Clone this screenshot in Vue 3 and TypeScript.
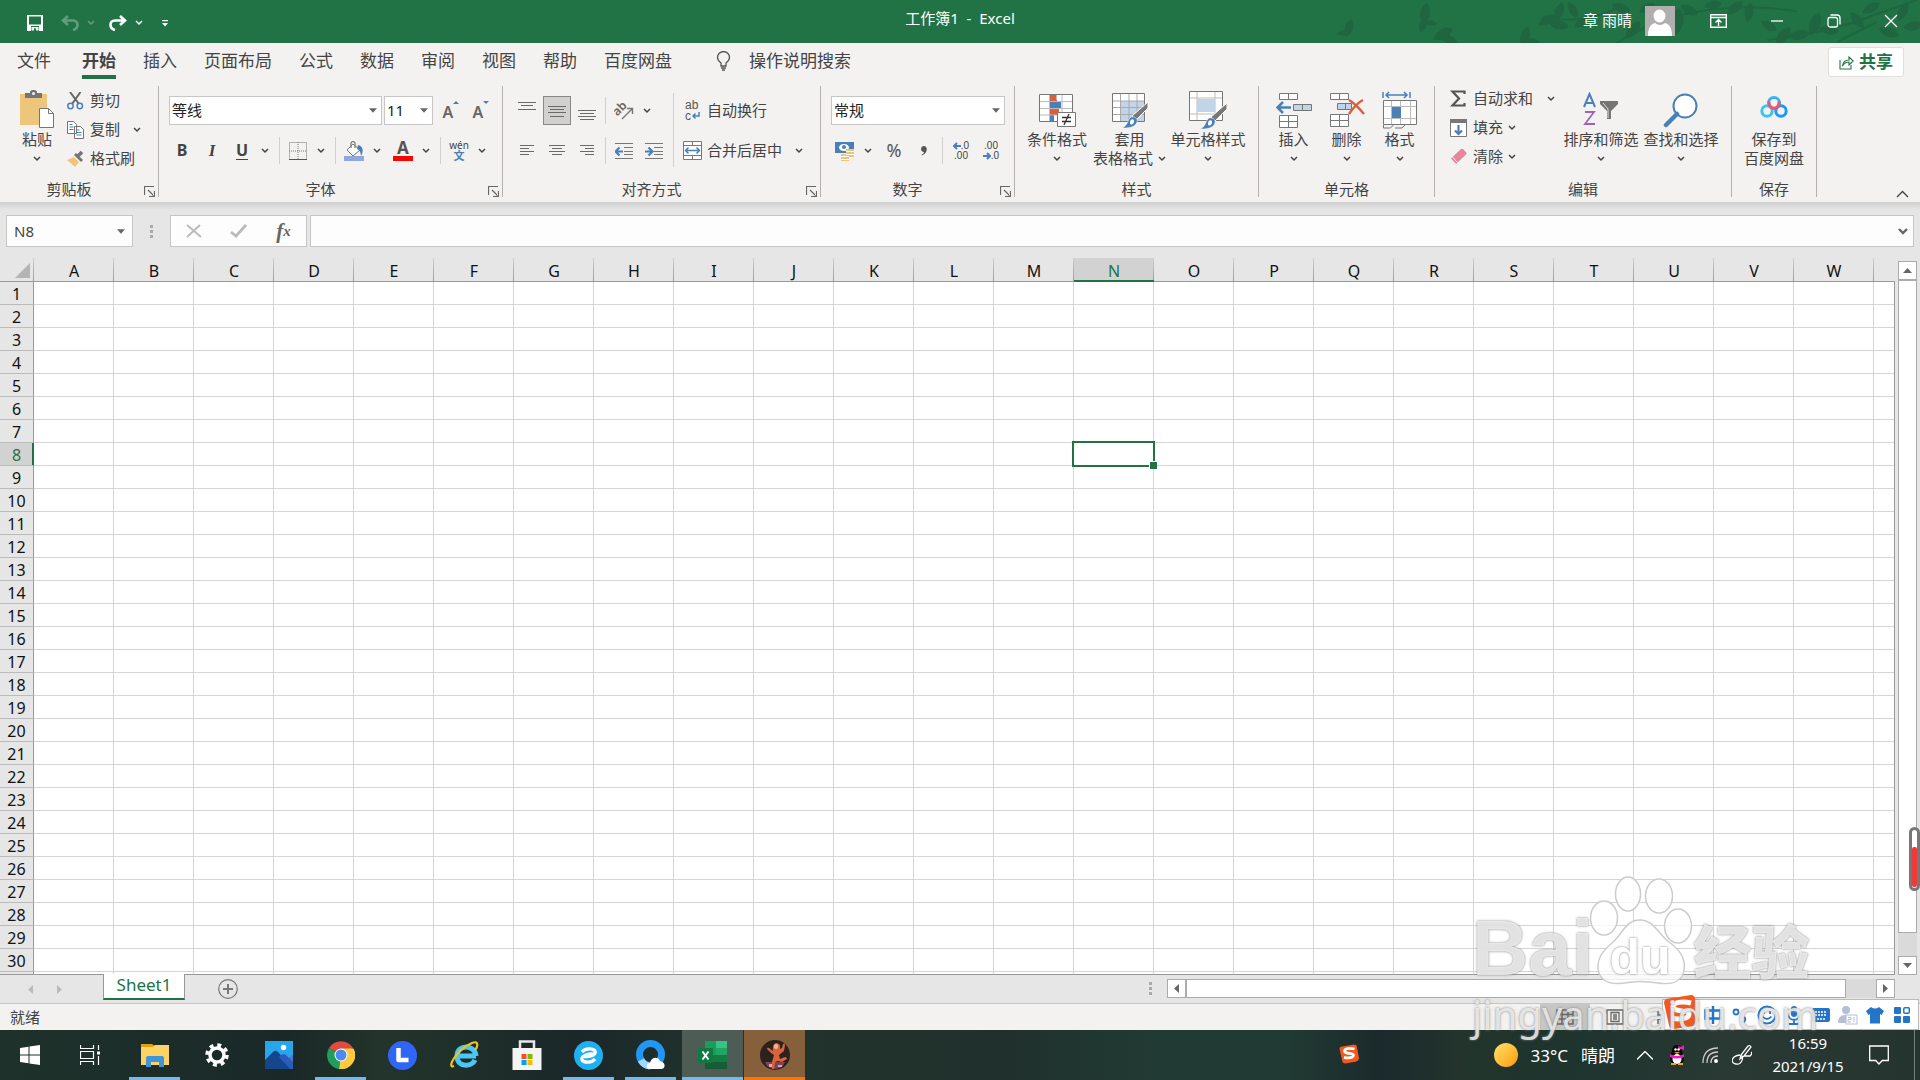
<script setup lang="ts">
import { h, ref } from 'vue'

const Chev = () =>
  h('svg', { class: 'chev', width: 8, height: 6, viewBox: '0 0 8 6', 'aria-hidden': 'true' }, [
    h('path', { d: 'M1 1l3 3 3-3', fill: 'none', stroke: 'currentColor', 'stroke-width': 1.5 }),
  ])

const Launcher = () =>
  h('svg', { class: 'launcher', width: 11, height: 11, viewBox: '0 0 11 11', 'aria-hidden': 'true' }, [
    h('path', { d: 'M.5 9V.5H10M4 4l5.500 5.500M10.500 5v5.500H5', fill: 'none', stroke: '#666', 'stroke-width': 1.2 }),
  ])

const Tri = (props: { dir: 'up' | 'down' | 'left' | 'right' }) => {
  const d = {
    up: 'M0 7L4.500 2 9 7z',
    down: 'M0 2L4.500 7 9 2z',
    left: 'M7 0L2 4.500 7 9z',
    right: 'M2 0l5 4.500L2 9z',
  }[props.dir]
  return h('svg', { width: 9, height: 9, viewBox: '0 0 9 9', 'aria-hidden': 'true' }, [h('path', { d, fill: 'currentColor' })])
}
Tri.props = ['dir']

const Lines = (props: { d: string }) =>
  h('svg', { width: 18, height: 18, viewBox: '0 0 18 18', 'aria-hidden': 'true' }, [
    h('path', { d: props.d, fill: 'none', stroke: '#6a6a6a', 'shape-rendering': 'crispEdges' }),
  ])
Lines.props = ['d']

const tabs: string[] = ['插入', '页面布局', '公式', '数据', '审阅', '视图', '帮助', '百度网盘']
const columns: string[] = 'ABCDEFGHIJKLMNOPQRSTUVW'.split('')
const rowCount = 30
const fontName = ref('等线')
const fontSize = ref('11')
const numberFormat = ref('常规')
const nameBox = ref('N8')
const formula = ref('')

interface Leaf { x: number; y: number; r: number; s: number }
const leaves: Leaf[] = [
  { x: 12, y: 28, r: 15, s: 9 }, { x: 6, y: 33, r: 80, s: 6 }, { x: 88, y: 14, r: 8, s: 11 }, { x: 86, y: 25, r: 20, s: 8 },
  { x: 94, y: 23, r: 100, s: 6 }, { x: 106, y: 34, r: 60, s: 11 }, { x: 112, y: 40, r: 110, s: 9 }, { x: 188, y: 36, r: 20, s: 10 },
  { x: 194, y: 42, r: 90, s: 9 }, { x: 210, y: 20, r: 60, s: 10 }, { x: 222, y: 12, r: 20, s: 10 }, { x: 222, y: 25, r: 100, s: 10 },
  { x: 236, y: 10, r: 150, s: 9 }, { x: 246, y: 22, r: 60, s: 10 }, { x: 284, y: 8, r: 110, s: 10 }, { x: 296, y: 30, r: 40, s: 11 },
  { x: 310, y: 8, r: 60, s: 9 }, { x: 340, y: 22, r: 10, s: 14 }, { x: 352, y: 10, r: 120, s: 10 }, { x: 376, y: 5, r: 80, s: 9 },
  { x: 398, y: 8, r: 50, s: 10 }, { x: 412, y: 12, r: 10, s: 10 }, { x: 432, y: 26, r: 120, s: 9 }, { x: 446, y: 36, r: 40, s: 11 },
  { x: 462, y: 35, r: 80, s: 11 }, { x: 478, y: 24, r: 20, s: 12 }, { x: 492, y: 30, r: 100, s: 10 }, { x: 520, y: 20, r: 140, s: 10 },
  { x: 534, y: 8, r: 60, s: 10 }, { x: 552, y: 32, r: 110, s: 11 }, { x: 566, y: 12, r: 30, s: 10 }, { x: 576, y: 26, r: 80, s: 10 },
]
</script>

<template>
  <div class="app">
    <header class="titlebar">
      <svg class="foliage" width="583" height="43" viewBox="0 0 583 43" aria-hidden="true">
        <g fill="#1f6640">
          <path
            v-for="(l, i) in leaves" :key="i" d="M0-1C.7-.4.5.5 0 1-.5.5-.7-.4 0-1z"
            :transform="`translate(${l.x} ${l.y}) rotate(${l.r}) scale(${l.s})`"
          />
        </g>
        <path d="M205 18c30 4 50 2 80-12M280 43c22-16 60-30 100-34s60 0 80 2M430 40c30-4 70-10 110-26l40-14M500 42l40-20" fill="none" stroke="#1f6640" stroke-width="2" />
      </svg>
      <nav class="quick" aria-label="快速访问">
        <button class="q-save" aria-label="保存">
          <svg width="16" height="16" viewBox="0 0 16 16"><path d="M0 0h16v16H0z" fill="#fff" /><path d="M2 1.500h12v8H2zM4 11h8v5H4z" fill="#217346" /><path d="M4.500 12h7v3.500h-2.500v-2H7v2H4.500z" fill="#fff" /><path d="M7 13.500h1.500V16H7z" fill="#217346" /></svg>
        </button>
        <button class="q-arrow dim" aria-label="撤消">
          <svg width="18" height="16" viewBox="0 0 18 16"><path d="M7 1L2 5.500 7 10M2.500 5.500H12c6 0 6 8 0 9.500" fill="none" stroke="currentColor" stroke-width="2.600" /></svg>
        </button>
        <button class="q-chev dim" aria-label="撤消列表"><Chev /></button>
        <button class="q-arrow" aria-label="恢复">
          <svg width="18" height="16" viewBox="0 0 18 16"><path d="M11 1l5 4.500L11 10M15.500 5.500H6c-6 0-6 8 0 9.500" fill="none" stroke="currentColor" stroke-width="2.600" /></svg>
        </button>
        <button class="q-chev" aria-label="恢复列表"><Chev /></button>
        <button class="q-more" aria-label="自定义快速访问工具栏">
          <svg width="6" height="7" viewBox="0 0 6 7"><path d="M0 0h6v1.200H0zM0 3h6L3 6.500z" fill="#fff" /></svg>
        </button>
      </nav>
      <h1 class="doc-title">工作簿1&nbsp; -&nbsp; Excel</h1>
      <div class="window-tools">
        <span class="user">章 雨晴</span>
        <svg class="avatar" width="30" height="30" viewBox="0 0 30 30" aria-hidden="true"><path d="M0 0h30v30H0z" fill="#b1afae" /><ellipse cx="14.500" cy="10" rx="6" ry="6.500" fill="#fff" /><path d="M3 30c0-9 3-12 7-13 3 2.500 7 2.500 10 0 4 1 7 4 7 13z" fill="#fff" /></svg>
        <button class="win opts" aria-label="功能区显示选项">
          <svg width="17" height="14" viewBox="0 0 17 14"><path d="M.7.700h15.600v12.600H.7zM1 3.500h15M8.500 12V5.500M5.500 8.500l3-3 3 3" fill="none" stroke="#fff" stroke-width="1.400" /></svg>
        </button>
        <button class="win" aria-label="最小化"><svg width="14" height="14" viewBox="0 0 14 14"><path d="M1 7h12" stroke="#fff" stroke-width="1.300" /></svg></button>
        <button class="win" aria-label="还原"><svg width="14" height="14" viewBox="0 0 14 14"><path d="M3.500 1h6.500q3 0 3 3v6.500" fill="none" stroke="#fff" stroke-width="1.300" /><rect x="1" y="3.500" width="9.500" height="9.500" rx="2" fill="none" stroke="#fff" stroke-width="1.300" /></svg></button>
        <button class="win" aria-label="关闭"><svg width="14" height="14" viewBox="0 0 14 14"><path d="M1 1l12 12M13 1L1 13" stroke="#fff" stroke-width="1.300" /></svg></button>
      </div>
    </header>

    <nav class="tabs" aria-label="功能区">
      <button class="tab file">文件</button>
      <button class="tab active">开始</button>
      <button v-for="t in tabs" :key="t" class="tab">{{ t }}</button>
      <button class="tell-me">
        <svg width="15" height="20" viewBox="0 0 15 20" aria-hidden="true"><path d="M5 15v-3C3 10.500 1.500 9 1.500 6.500a6 6 0 0 1 12 0C13.500 9 12 10.500 10 12v3zM5 17h5M6 19h3" fill="none" stroke="#555" stroke-width="1.300" /></svg>
        <span>操作说明搜索</span>
      </button>
      <button class="share">
        <svg width="15" height="15" viewBox="0 0 15 15" aria-hidden="true"><path d="M1 5v9h11v-4M3.500 11C4 7 6 5 10 5V2l4.200 4L10 10V7C7 7 5 8.500 3.500 11z" fill="none" stroke="#217346" stroke-width="1.100" /></svg>
        <span>共享</span>
      </button>
    </nav>

    <div class="ribbon">
      <section class="group g-clip">
        <div class="body">
          <button class="big paste">
            <span class="big-icon">
              <svg width="36" height="40" viewBox="0 0 36 40"><path d="M1 4h27v31H1z" fill="#eec67b" /><path d="M6 3h5V1.500Q14.500-2 18 1.500V3h5v5H6z" fill="#757575" /><circle cx="14.500" cy="3.500" r="1.500" fill="#f3f2f1" /><path d="M20.500 18.500h9l5 5v14h-14z" fill="#fff" stroke="#757575" /><path d="M29.500 18.500v5h5" fill="none" stroke="#757575" /></svg>
            </span>
            <span class="line">粘贴</span><span class="line"><Chev /></span>
          </button>
          <div class="list roomy">
            <button class="row">
              <svg class="ri" width="17" height="18" viewBox="0 0 17 18"><path d="M3 0l9 12M13.500 0L5 12" stroke="#666" stroke-width="2" /><circle cx="3.500" cy="14" r="2.700" fill="none" stroke="#4a80b8" stroke-width="1.500" /><circle cx="12.800" cy="14" r="2.700" fill="none" stroke="#4a80b8" stroke-width="1.500" /></svg>
              <span>剪切</span>
            </button>
            <button class="row">
              <svg class="ri" width="17" height="18" viewBox="0 0 17 18"><path d="M.5.500h6l3 3v9h-9zM7.500 5.500h6l3 3v9h-9z" fill="#fff" stroke="#757575" /><path d="M2.500 3.500h3M2.500 6h4M2.500 8.500h4M9.500 9h3M9.500 11.500h5M9.500 14h5" stroke="#4a80b8" /></svg>
              <span>复制</span><i class="gap-chev"><Chev /></i>
            </button>
            <button class="row">
              <svg class="ri" width="17" height="18" viewBox="0 0 17 18"><path d="M0 10l7-3 5 5-4 5z" fill="#eec67b" /><path d="M7 5l2-2 7 7-2 2z" fill="#757575" /><path d="M10 7l5-5" stroke="#757575" stroke-width="3.500" /></svg>
              <span>格式刷</span>
            </button>
          </div>
        </div>
        <div class="foot"><span>剪贴板</span><Launcher /></div>
      </section>

      <section class="group g-font">
        <div class="stack">
          <div class="tools fields">
            <div class="select w-font">
              <select v-model="fontName" aria-label="字体"><option>等线</option></select><Tri dir="down" />
            </div>
            <div class="select w-size">
              <select v-model="fontSize" aria-label="字号"><option>11</option></select><Tri dir="down" />
            </div>
            <button class="ib" aria-label="增大字号"><span class="letter-a">A</span><svg class="mark" width="6" height="4" viewBox="0 0 6 4"><path d="M0 3l3-3 3 3z" fill="#4a80b8" /></svg></button>
            <button class="ib" aria-label="减小字号"><span class="letter-a">A</span><svg class="mark" width="6" height="4" viewBox="0 0 6 4"><path d="M0 0l3 3 3-3z" fill="#4a80b8" /></svg></button>
          </div>
          <div class="tools">
            <button class="ib bold">B</button>
            <button class="ib italic">I</button>
            <button class="ib under">U</button>
            <button class="cb" aria-label="下划线样式"><Chev /></button>
            <i class="sep wide"></i>
            <button class="ib" aria-label="边框"><svg width="18" height="18" viewBox="0 0 18 18"><path d="M.5.500h17v17H.5zM9 0v18M0 9h18" fill="none" stroke="#777" stroke-dasharray="1 1" /><path d="M0 17.500h18" stroke="#555" /></svg></button>
            <button class="cb" aria-label="边框样式"><Chev /></button>
            <i class="sep wide"></i>
            <button class="ib" aria-label="填充颜色"><svg width="20" height="20" viewBox="0 0 20 20"><path d="M3 9l6-6 7 6-7 6z" fill="#fff" stroke="#777" /><path d="M7 7V2q2-3 4 0v5" fill="none" stroke="#777" stroke-width="1.200" /><path d="M14 4c5 1 6 6 3 11-.5-4-1-6-4-7z" fill="#4a80b8" /><path d="M0 15h20v5H0z" fill="#8ea9db" /></svg></button>
            <button class="cb" aria-label="填充颜色列表"><Chev /></button>
            <i class="nudge"></i>
            <button class="ib colour-a" aria-label="字体颜色"><span>A</span></button>
            <button class="cb" aria-label="字体颜色列表"><Chev /></button>
            <i class="sep wide"></i>
            <button class="ib pinyin"><span>wén</span><b>文</b></button>
            <button class="cb" aria-label="拼音选项"><Chev /></button>
          </div>
        </div>
        <div class="foot"><span>字体</span><Launcher /></div>
      </section>

      <section class="group g-align">
        <div class="align-area">
          <div class="stack">
            <div class="tools fields">
              <button class="ib" aria-label="顶端对齐"><Lines d="M0 .500h18M3 3.500h12M0 7.500h18" /></button>
              <button class="ib on" aria-label="垂直居中"><Lines d="M0 4.500h18M2 7.500h14M0 10.500h18M2 14.500h14" /></button>
              <button class="ib" aria-label="底端对齐"><Lines d="M0 8.500h18M2 11.500h14M0 14.500h18M2 17.500h14" /></button>
              <i class="sep"></i>
              <button class="ib" aria-label="方向"><svg width="20" height="20" viewBox="0 0 20 20"><text x="1" y="14" font-family="Noto Sans" font-size="12" font-weight="600" fill="#666" transform="rotate(-45 4 12)">ab</text><path d="M8 18L18 8M13 7.500h5.500V13" fill="none" stroke="#777" stroke-width="1.400" /></svg></button>
              <button class="cb" aria-label="方向选项"><Chev /></button>
            </div>
            <div class="tools">
              <button class="ib" aria-label="左对齐"><Lines d="M2 3.500h14M2 6.500h9M2 9.500h14M2 12.500h9" /></button>
              <button class="ib" aria-label="居中"><Lines d="M1 3.500h16M4 6.500h10M1 9.500h16M4 12.500h10" /></button>
              <button class="ib" aria-label="右对齐"><Lines d="M2 3.500h14M7 6.500h9M2 9.500h14M7 12.500h9" /></button>
              <i class="sep"></i>
              <button class="ib" aria-label="减少缩进量"><svg width="18" height="18" viewBox="0 0 18 18"><path d="M0 1.500h18M9 5.500h9M9 9.500h9M9 12.500h9M0 16.500h18" stroke="#777" /><path d="M8 9.500H1M4.500 5.500l-4 4 4 4" fill="none" stroke="#4a80b8" stroke-width="2.200" /></svg></button>
              <button class="ib" aria-label="增加缩进量"><svg width="18" height="18" viewBox="0 0 18 18"><path d="M0 1.500h18M9 5.500h9M9 9.500h9M9 12.500h9M0 16.500h18" stroke="#777" /><path d="M0 9.500h7M3.500 5.500l4 4-4 4" fill="none" stroke="#4a80b8" stroke-width="2.200" /></svg></button>
            </div>
          </div>
          <i class="tall-sep"></i>
          <div class="stack">
            <button class="row wrap-row">
              <span class="ri wrap-icon" aria-hidden="true"><span>ab</span><span>c<svg width="9" height="8" viewBox="0 0 9 8"><path d="M8 0v4H2M4.500 1.500L2 4l2.500 2.500" fill="none" stroke="#4a80b8" stroke-width="1.500" /></svg></span></span>
              <span>自动换行</span>
            </button>
            <button class="row">
              <svg class="ri" width="19" height="19" viewBox="0 0 19 19"><path d="M.5.500h18v18H.5z" fill="#fff" stroke="#777" /><path d="M.5 4.500h18M.5 14.500h18M9.500 0v4M9.500 15v4" stroke="#777" /><path d="M3 9.500h13M5.500 6.500l-3 3 3 3M13.500 6.500l3 3-3 3" fill="none" stroke="#4a80b8" stroke-width="1.500" /></svg>
              <span>合并后居中</span><i class="gap-chev"><Chev /></i>
            </button>
          </div>
        </div>
        <div class="foot"><span>对齐方式</span><Launcher /></div>
      </section>

      <section class="group g-num">
        <div class="stack">
          <div class="tools fields">
            <div class="select w-num">
              <select v-model="numberFormat" aria-label="数字格式"><option>常规</option></select><Tri dir="down" />
            </div>
          </div>
          <div class="tools">
            <button class="ib" aria-label="会计数字格式"><svg width="20" height="20" viewBox="0 0 20 20"><path d="M0 1h19v11H0z" fill="#4a80b8" /><ellipse cx="9" cy="6.500" rx="5" ry="3.500" fill="#fff" /><circle cx="9" cy="6" r="2" fill="#4a80b8" /><path d="M11 8h8v8h-8zM6 13h8v7H6z" fill="#eec67b" /><path d="M11 10.500h8M11 13.500h8M6 15.500h8M6 18.500h8" stroke="#fff" /></svg></button>
            <button class="cb" aria-label="货币列表"><Chev /></button>
            <i class="nudge"></i>
            <button class="ib percent">%</button>
            <button class="ib" aria-label="千位分隔样式"><svg width="6" height="10" viewBox="0 0 6 10"><path d="M3 0c4 0 4 7-2 9.500L.5 9C2 8 3 7 3 6-1 6-1 0 3 0z" fill="#555" /></svg></button>
            <i class="sep"></i>
            <button class="ib dec"><span><svg width="8" height="8" viewBox="0 0 8 8"><path d="M8 4H1M4 1L1 4l3 3" fill="none" stroke="#4a80b8" stroke-width="2" /></svg>.0</span><span>.00</span></button>
            <button class="ib dec"><span>.00</span><span><svg width="8" height="8" viewBox="0 0 8 8"><path d="M0 4h7M4 1l3 3-3 3" fill="none" stroke="#4a80b8" stroke-width="2" /></svg>.0</span></button>
          </div>
        </div>
        <div class="foot"><span>数字</span><Launcher /></div>
      </section>

      <section class="group g-style">
        <div class="body">
          <button class="big w70">
            <span class="big-icon"><svg width="38" height="36" viewBox="0 0 38 36"><path d="M1 2h33v27H1z" fill="#fff" /><path d="M11 2h8v7h-8zM11 17h10v6H11z" fill="#d9603b" /><path d="M11 9h12v7H11zM11 23h5v6h-5z" fill="#4a80b8" /><path d="M1 9.500h33M1 16.500h33M1 23h33M11.500 2v27M18.500 2v6M24 2v27" fill="none" stroke="#bbb" /><path d="M1.500 2.500h33v27h-33z" fill="none" stroke="#777" /><path d="M19.500 20.500h18v14h-18z" fill="#fff" stroke="#777" /><path d="M24 25.500h9M24 29.500h9M31 22l-5 11" stroke="#333" stroke-width="1.300" /></svg></span>
            <span class="line">条件格式</span><span class="line"><Chev /></span>
          </button>
          <button class="big w74">
            <span class="big-icon"><svg width="38" height="36" viewBox="0 0 38 36"><path d="M1.500 1.500h33v28h-33z" fill="#fff" /><path d="M10 9h24v20H10z" fill="#c2d4e8" /><path d="M1 9h33M1 15.500h33M1 22.500h33M9.500 1v28M18 1v28M26 1v28" stroke="#aaa" /><path d="M1.500 1.500h32v28h-32z" fill="none" stroke="#777" /><path d="M37 10v6L25 28l-4-4z" fill="#777" stroke="#fff" /><path d="M11 36c6-2 5-8 9-11 5-1 8 3 5 7-3 4-9 4-14 4z" fill="#4a80b8" stroke="#fff" stroke-width=".500" /><path d="M19 30c0-3 4-4 4-1s-2 4-4 3z" fill="#fff" /></svg></span>
            <span class="line">套用</span><span class="line">表格格式<Chev /></span>
          </button>
          <button class="big w82">
            <span class="big-icon"><svg width="38" height="38" viewBox="0 0 38 38"><path d="M.5.500h33v29H.5z" fill="#fff" /><path d="M0 7h33M0 23h33M8 0v29M26 0v29" stroke="#bbb" /><path d="M8 8h18v13H8z" fill="#c2d4e8" /><path d="M.5.500h33v29H.5z" fill="none" stroke="#777" /><path d="M38 12v6L26 30l-4-4z" fill="#777" stroke="#fff" /><path d="M11 38c6-2 5-8 9-11 5-1 8 3 5 7-3 4-9 4-14 4z" fill="#4a80b8" stroke="#fff" stroke-width=".500" /><path d="M19 32c0-3 4-4 4-1s-2 4-4 3z" fill="#fff" /></svg></span>
            <span class="line">单元格样式</span><span class="line"><Chev /></span>
          </button>
        </div>
        <div class="foot plain"><span>样式</span></div>
      </section>

      <section class="group g-cells">
        <div class="body">
          <button class="big w52">
            <span class="big-icon"><svg width="36" height="36" viewBox="0 0 36 36"><path d="M3.500 1.500h18v6h-18zM3.500 23.500h18v12h-18zM3.500 29.500h18M12.500 1.500v6M12.500 23.500v12" fill="#fff" stroke="#777" /><path d="M17.500 12.500h18v6h-18zM26.500 12.500v6" fill="#c2d4e8" stroke="#777" /><path d="M15 15.500H2M7 10l-5.500 5.500L7 21" fill="none" stroke="#4a80b8" stroke-width="2.500" /></svg></span>
            <span class="line">插入</span><span class="line"><Chev /></span>
          </button>
          <button class="big w52">
            <span class="big-icon"><svg width="36" height="36" viewBox="0 0 36 36"><path d="M1.500 1.500h18v6h-18zM1.500 22.500h18v12h-18zM1.500 28.500h18M10.500 1.500v6M10.500 22.500v12" fill="#fff" stroke="#777" /><path d="M8.500 11.500h14v6h-14zM16.500 11.500v6" fill="#c2d4e8" stroke="#4a80b8" /><path d="M20 8c5 3 10 8 15 14M34 8c-6 3-10 8-14 14" fill="none" stroke="#d9603b" stroke-width="2.500" /></svg></span>
            <span class="line">删除</span><span class="line"><Chev /></span>
          </button>
          <button class="big w52">
            <span class="big-icon"><svg width="36" height="38" viewBox="0 0 36 38"><path d="M1.500 9.500h33v24h-33z" fill="#fff" /><path d="M1 15.500h33M1 27.500h33M9.500 9v24M18.500 9v24M28.500 9v24" stroke="#bbb" /><path d="M10 16h9v11h-9z" fill="#4a80b8" /><path d="M1.500 9.500h33v24h-33z" fill="none" stroke="#777" /><path d="M1.500 34v3h7l3-3M13 37h7l3-3" fill="none" stroke="#777" /><path d="M1 1v6M28 1v6M4 4h21M7 1L4 4l3 3M22 1l3 3-3 3" fill="none" stroke="#4a80b8" stroke-width="1.500" /></svg></span>
            <span class="line">格式</span><span class="line"><Chev /></span>
          </button>
        </div>
        <div class="foot plain"><span>单元格</span></div>
      </section>

      <section class="group g-edit">
        <div class="body">
          <div class="list dense">
            <button class="row">
              <svg class="ri" width="17" height="17" viewBox="0 0 17 17"><path d="M14.500 4V1.500H2.500L9 8.500l-6.500 7h12V13" fill="none" stroke="#555" stroke-width="2.200" /></svg>
              <span>自动求和</span><i class="gap-chev"><Chev /></i>
            </button>
            <button class="row">
              <svg class="ri" width="17" height="18" viewBox="0 0 17 18"><path d="M.5.500h16v17H.5z" fill="#fff" stroke="#777" /><path d="M0 0h17v4H0z" fill="#777" /><path d="M8.500 6v9M5 11.500l3.500 3.500 3.500-3.500" fill="none" stroke="#4a80b8" stroke-width="2.200" /></svg>
              <span>填充</span><Chev />
            </button>
            <button class="row">
              <svg class="ri" width="17" height="17" viewBox="0 0 17 17"><path d="M11 1h2l3.500 4v1L6 16 1 10.500z" fill="#e5869a" /><path d="M2.500 9l5 5.500" stroke="#f3f2f1" /></svg>
              <span>清除</span><Chev />
            </button>
          </div>
          <button class="big w80">
            <span class="big-icon"><svg width="36" height="36" viewBox="0 0 36 36"><path d="M17 9h18v3l-7 7v8h-4v-8l-7-7z" fill="#757575" /><path d="M20 11l5 6v9" fill="none" stroke="#ddd" /><path d="M1 15L6.500 2 12 15M3 11h7" fill="none" stroke="#4a80b8" stroke-width="2" /><path d="M2 20h9L2 32h10" fill="none" stroke="#9a64b8" stroke-width="1.800" /></svg></span>
            <span class="line">排序和筛选</span><span class="line"><Chev /></span>
          </button>
          <button class="big w80">
            <span class="big-icon"><svg width="36" height="36" viewBox="0 0 36 36"><circle cx="22" cy="14" r="11.500" fill="#fff" stroke="#4a80b8" stroke-width="2" /><path d="M14 22L3 33" stroke="#4a80b8" stroke-width="4.500" stroke-linecap="round" /></svg></span>
            <span class="line">查找和选择</span><span class="line"><Chev /></span>
          </button>
        </div>
        <div class="foot plain"><span>编辑</span></div>
      </section>

      <section class="group g-save">
        <div class="body">
          <button class="big w84">
            <span class="big-icon cloud"><svg width="28" height="22" viewBox="0 0 28 22"><circle cx="14" cy="7" r="5.500" fill="none" stroke="#33b5f5" stroke-width="3" /><circle cx="7" cy="15" r="5.200" fill="none" stroke="#3cc4ee" stroke-width="3" /><circle cx="21" cy="15" r="5.200" fill="none" stroke="#1b9bf5" stroke-width="3" /><path d="M9 5.500c-1 9 11 9 10 0" fill="none" stroke="#f2506e" stroke-width="3" /></svg></span>
            <span class="line">保存到</span><span class="line">百度网盘</span>
          </button>
        </div>
        <div class="foot plain"><span>保存</span></div>
      </section>
      <button class="collapse" aria-label="折叠功能区"><svg width="13" height="8" viewBox="0 0 13 8"><path d="M1 7l5.500-5.500L12 7" fill="none" stroke="#444" stroke-width="1.400" /></svg></button>
    </div>

    <div class="formula-bar">
      <div class="name-box"><input v-model="nameBox" aria-label="名称框"><Tri dir="down" /></div>
      <span class="dots"><i></i><i></i><i></i></span>
      <div class="fx">
        <button aria-label="取消"><svg width="16" height="14" viewBox="0 0 16 14"><path d="M1 1l14 12M14 1L1 13" stroke="#bbb" stroke-width="2" /></svg></button>
        <button aria-label="输入"><svg width="17" height="14" viewBox="0 0 17 14"><path d="M1 8l5 4L16 1" fill="none" stroke="#bbb" stroke-width="2.800" /></svg></button>
        <button class="fx-btn">f<sub>x</sub></button>
      </div>
      <div class="formula">
        <input v-model="formula" aria-label="编辑栏">
        <svg width="10" height="7" viewBox="0 0 10 7" aria-hidden="true"><path d="M1 1l4 4 4-4" fill="none" stroke="#666" stroke-width="2.400" /></svg>
      </div>
    </div>

    <main class="sheet">
      <div class="grid-wrap">
        <table class="cells">
          <thead>
            <tr>
              <th class="corner"><svg width="15" height="15" viewBox="0 0 15 15" aria-hidden="true"><path d="M15 0v15H0z" fill="#b4b4b4" /></svg></th>
              <th v-for="c in columns" :key="c" scope="col" :class="{ sel: c === 'N' }">{{ c }}</th>
              <th></th>
            </tr>
          </thead>
          <tbody>
            <tr v-for="r in rowCount + 1" :key="r">
              <th scope="row" :class="{ sel: r === 8 }">{{ r <= rowCount ? r : '' }}</th>
              <td v-for="c in columns" :key="c" :class="{ cur: r === 8 && c === 'N' }"></td>
              <td></td>
            </tr>
          </tbody>
        </table>
      </div>
      <div class="vscroll">
        <button aria-label="向上滚动"><Tri dir="up" /></button>
        <div class="v-thumb"></div>
        <div class="v-rest"></div>
        <button aria-label="向下滚动"><Tri dir="down" /></button>
      </div>
      <div class="meter" aria-hidden="true"><i></i></div>
    </main>

    <div class="sheet-bar">
      <div class="sheet-nav"><button aria-label="上一个"><Tri dir="left" /></button><button aria-label="下一个"><Tri dir="right" /></button></div>
      <button class="sheet-tab">Sheet1</button>
      <button class="add" aria-label="新工作表"><svg width="20" height="20" viewBox="0 0 20 20"><circle cx="10" cy="10" r="9.300" fill="none" stroke="#777" stroke-width="1.200" /><path d="M5 10h10M10 5v10" stroke="#777" stroke-width="2" /></svg></button>
      <span class="dots"><i></i><i></i><i></i></span>
      <div class="hscroll">
        <button aria-label="向左滚动"><Tri dir="left" /></button>
        <div class="h-thumb"></div>
        <div class="h-rest"></div>
        <button aria-label="向右滚动"><Tri dir="right" /></button>
      </div>
    </div>

    <footer class="status">
      <span>就绪</span>
      <div class="views">
        <button class="view on" aria-label="普通"><svg width="18" height="16" viewBox="0 0 18 16"><path d="M1 1h16v14H1zM1 5.500h16M1 10h16M6 1v14M12 1v14" fill="none" stroke="#666" stroke-width="1.500" /></svg></button>
        <button class="view" aria-label="页面布局"><svg width="18" height="16" viewBox="0 0 18 16"><path d="M1 1h16v14H1zM5 3.500h8v9H5zM7 6h4M7 8h4M7 10h4" fill="none" stroke="#666" stroke-width="1.300" /></svg></button>
        <button class="view" aria-label="分页预览"><svg width="18" height="16" viewBox="0 0 18 16"><path d="M2 1v5h5V1M11 1v5h5V1M2 15v-5h14v5" fill="none" stroke="#666" stroke-width="1.500" /></svg></button>
      </div>
      <div class="ime">
        <svg class="ime-logo" width="36" height="36" viewBox="0 0 36 36"><path d="M3 5L28 1q3 0 4 3l4 22q-1 4-6 6l-19 3q-4 0-5-4L1 9q0-3 2-4z" fill="#f4581e" /><path d="M28 9C20 7 9 8 10 13c1 6 16 2 16 7s-10 6-17 4" fill="none" stroke="#fff" stroke-width="5" /></svg>
        <button aria-label="中文"><svg width="18" height="20" viewBox="0 0 18 20"><path d="M1.500 5.500h15v8h-15zM9 1v18" fill="none" stroke="#2475c8" stroke-width="2.500" /></svg></button>
        <button aria-label="标点"><svg width="18" height="20" viewBox="0 0 18 20"><circle cx="5" cy="7" r="2.500" fill="none" stroke="#2475c8" stroke-width="1.800" /><path d="M13 12q3 2-1 6" fill="none" stroke="#2475c8" stroke-width="2" /></svg></button>
        <button aria-label="表情"><svg width="20" height="20" viewBox="0 0 20 20"><circle cx="10" cy="10" r="8.500" fill="none" stroke="#2475c8" stroke-width="2" /><path d="M7 6v3M13 6v3M5.500 11.500q4.500 5 9 0" fill="none" stroke="#2475c8" stroke-width="1.800" /></svg></button>
        <button aria-label="语音"><svg width="18" height="20" viewBox="0 0 18 20"><rect x="6" y="1" width="6" height="11" rx="3" fill="#2475c8" /><path d="M3 8c0 9 12 9 12 0M9 14v5M4 19h10" fill="none" stroke="#2475c8" stroke-width="1.800" /></svg></button>
        <button aria-label="软键盘"><svg width="20" height="20" viewBox="0 0 20 20"><rect x="1" y="3" width="18" height="14" rx="2" fill="#2475c8" /><path d="M4 7h12M4 10h12M6 14h8" stroke="#fff" stroke-width="1.500" stroke-dasharray="2 1" /></svg></button>
        <button aria-label="账户"><svg width="20" height="20" viewBox="0 0 20 20"><circle cx="8" cy="5" r="4" fill="#b3bfd6" /><path d="M0 17c0-9 14-9 14-3v4H1z" fill="#b3bfd6" /><rect x="8" y="10" width="11" height="9" fill="#fff" stroke="#b3bfd6" /><path d="M10 12.500h3v2h-3v2.500h3M16 12v5" fill="none" stroke="#b3bfd6" /></svg></button>
        <button aria-label="皮肤"><svg width="18" height="20" viewBox="0 0 18 20"><path d="M5 2q4 3 8 0l5 4-2.500 4L14 9v9.500H4V9l-1.500 1L0 6z" fill="#2475c8" /></svg></button>
        <button aria-label="工具箱"><svg width="18" height="20" viewBox="0 0 18 20"><rect x="1" y="2" width="7" height="7" rx="1" fill="#2475c8" /><rect x="1" y="11" width="7" height="7" rx="1" fill="#2475c8" /><rect x="10" y="11" width="7" height="7" rx="1" fill="#2475c8" /><rect x="10.800" y="2.800" width="5.500" height="5.500" rx="1" fill="none" stroke="#2475c8" stroke-width="1.500" /></svg></button>
      </div>
    </footer>

    <nav class="taskbar" aria-label="任务栏">
      <button class="sys" aria-label="开始"><svg width="20" height="20" viewBox="0 0 20 20"><path d="M0 3l8.500-1.200V9.500H0zM9.500 1.600L20 0v9.500H9.500zM0 10.500h8.500v7.700L0 17zM9.500 10.500H20V20L9.500 18.400z" fill="#fff" /></svg></button>
      <button class="sys" aria-label="任务视图"><svg width="20" height="20" viewBox="0 0 20 20"><path d="M.5 0v3.500h13V0M.5 20v-3.500h13V20M.5 6.500h13v7H.5zM18.500 0v5M18.500 11v9" fill="none" stroke="#fff" stroke-width="1.200" /><path d="M17 6.500h3v3h-3z" fill="#fff" /></svg></button>
      <i class="nudge"></i>
      <button class="task run" aria-label="文件资源管理器"><svg width="28" height="24" viewBox="0 0 28 24"><path d="M0 1h11l3 2v4H0z" fill="#e0a010" /><path d="M0 4h12l2-2h14v20H0z" fill="#fdd365" /><path d="M5 24V15q0-2 2-2h14q2 0 2 2v9h-5v-5h-8v5z" fill="#3f95d8" /></svg></button>
      <button class="task" aria-label="设置"><svg width="24" height="24" viewBox="0 0 24 24"><circle cx="12" cy="12" r="7" fill="none" stroke="#fff" stroke-width="3.500" /><circle cx="12" cy="12" r="10" fill="none" stroke="#fff" stroke-width="3.500" stroke-dasharray="3.900 3.954" /></svg></button>
      <button class="task" aria-label="照片"><svg width="28" height="28" viewBox="0 0 28 28"><path d="M0 0h28v28H0z" fill="#28a6ea" /><path d="M12 28L28 13v15z" fill="#5672d0" /><path d="M0 19L9 10q2-1 4 1l15 17H0z" fill="#15458a" /><path d="M14 16q4-5 7-2l7 7v7h-3z" fill="#2b5cba" /><circle cx="18.500" cy="6.500" r="2.700" fill="#fff" /></svg></button>
      <button class="task run" aria-label="浏览器"><svg width="28" height="28" viewBox="0 0 28 28"><path d="M14 14L2 7a14 14 0 0 1 24 0z" fill="#e04b3f" /><path d="M14 14L2 7a14 14 0 0 0 10 21z" fill="#1f9f5b" /><path d="M14 14l-2 14A14 14 0 0 0 26.500 7.500H14z" fill="#fecb3e" /><circle cx="14" cy="14" r="6.500" fill="#fff" /><circle cx="14" cy="14" r="5.500" fill="#4a8af4" /></svg></button>
      <button class="task" aria-label="联想"><svg width="29" height="29" viewBox="0 0 29 29"><circle cx="14.500" cy="14.500" r="14.500" fill="#2f66f5" /><path d="M10.500 7v12h10" fill="none" stroke="#fff" stroke-width="4.500" stroke-linejoin="round" /></svg></button>
      <button class="task" aria-label="Internet Explorer"><svg width="30" height="28" viewBox="0 0 30 28"><path d="M6 15h20M25 19c-3 7-18 8-18-4S25 3 26 15" fill="none" stroke="#4cc6f2" stroke-width="5" /><path d="M4 25C-4 28 6 9 22 2c7-3 6 4 3 7" fill="none" stroke="#f2c21c" stroke-width="2.200" /></svg></button>
      <button class="task" aria-label="应用商店"><svg width="30" height="30" viewBox="0 0 30 30"><path d="M8 8V1.500h14V8" fill="none" stroke="#e8e8e8" stroke-width="2.500" /><path d="M.5 8h29v22H.5z" fill="#f4f4f4" /><path d="M9.500 14h5v5h-5z" fill="#f25022" /><path d="M15.500 14h5v5h-5z" fill="#7fba00" /><path d="M9.500 20h5v5h-5z" fill="#00a4ef" /><path d="M15.500 20h5v5h-5z" fill="#ffb900" /></svg></button>
      <button class="task run" aria-label="网络浏览器"><svg width="29" height="29" viewBox="0 0 29 29"><circle cx="14.500" cy="14.500" r="14.500" fill="#1fb0f2" /><path d="M9 15c5 2 14-1 12-5-2-3-10-3-13 1M20 13c-5-1-14 2-12 6 2 3 10 3 13-1" fill="none" stroke="#fff" stroke-width="3.200" /></svg></button>
      <button class="task run" aria-label="QQ浏览器"><svg width="30" height="30" viewBox="0 0 30 30"><circle cx="14.500" cy="14.500" r="11" fill="none" stroke="#2196f3" stroke-width="7" /><path d="M5 20a11 11 0 0 0 9 6" fill="none" stroke="#9fd8fa" stroke-width="7" /><path d="M13 29c-4-2-2-6 1-6 1-6 8-7 10-2 6 1 6 8 1 8z" fill="#fff" /></svg></button>
      <button class="task run current" aria-label="Excel"><svg width="30" height="28" viewBox="0 0 30 28"><path d="M7 0h22v28H7z" fill="#1c9c5b" /><path d="M18 0h11v7H18z" fill="#35c481" /><path d="M18 7h11v7H18z" fill="#22a565" /><path d="M7 14h22v7H7z" fill="#137c41" /><path d="M7 21h22v7H7z" fill="#185c37" /><rect y="7" width="15" height="15" rx="1" fill="#107a40" /><path d="M4.500 10.500l6 8M10.500 10.500l-6 8" stroke="#fff" stroke-width="2" /></svg></button>
      <button class="task run alert" aria-label="视频"><svg width="30" height="30" viewBox="0 0 30 30"><circle cx="15" cy="15" r="15" fill="#2c211f" /><path d="M5 22h20l-2 4q-8 6-16 0z" fill="#7c4350" /><path d="M9 24h3v3H9zM18 25h4v2h-4z" fill="#e8a0b4" /><path d="M7 9q0-2 2-1l4 3q-1-7 3-8 5 0 4 6l2-1 1-4q2-1 2 1l-1 6-5 4 1 4q4-2 6-2l1 2-5 3-4-1-3 1-1 7h-2V22l2-7-3-2z" fill="#d9633a" /><path d="M14 5q2-2 4 0v3q-2 2-4 0z" fill="#f0b58a" /></svg></button>
      <div class="tray">
        <svg class="sogou" width="20" height="20" viewBox="0 0 36 36" aria-hidden="true"><path d="M3 5L28 1q3 0 4 3l4 22q-1 4-6 6l-19 3q-4 0-5-4L1 9q0-3 2-4z" fill="#f4581e" /><path d="M28 9C20 7 9 8 10 13c1 6 16 2 16 7s-10 6-17 4" fill="none" stroke="#fff" stroke-width="5" /></svg>
        <button class="weather"><i class="sun"></i><span>33°C</span><span>晴朗</span></button>
        <button class="tr" aria-label="显示隐藏的图标"><svg width="16" height="9" viewBox="0 0 16 9"><path d="M0 8.500l8-8 8 8" fill="none" stroke="#fff" stroke-width="1.400" /></svg></button>
        <button class="tr slim" aria-label="QQ"><svg width="16" height="20" viewBox="0 0 16 20"><path d="M3 6q0-6 5-6t5 6l2 7q0 6-7 6t-7-6z" fill="#090909" /><ellipse cx="8" cy="14" rx="4.500" ry="5" fill="#fff" /><path d="M1 9q7 4 14 0v3q-7 3-14 0zM9 1l3 1 3-2v5l-3-1-2 1z" fill="#f21bc3" /><circle cx="6.500" cy="4.500" r="1.200" fill="#fff" /><circle cx="9.500" cy="4.500" r="1.200" fill="#fff" /><path d="M5 7h6l-3 2zM2 18h5v2H2zM9 18h5v2H9z" fill="#f5a30a" /></svg></button>
        <button class="tr" aria-label="网络"><svg width="16" height="16" viewBox="0 0 16 16"><path d="M1 16Q1 1 16 1M5 16Q5 5 16 5M9 16q0-7 7-7" fill="none" stroke="#ccc" stroke-width="1.300" /><circle cx="14" cy="14" r="2" fill="#fff" /></svg></button>
        <button class="tr" aria-label="笔"><svg width="20" height="20" viewBox="0 0 20 20"><path d="M8 14l1-4 7-9q2-1 3 1l-7 9zM8 10c-9 1-10 8-4 9s8-7 5-9M12 11h6q3-3 1-4" fill="none" stroke="#fff" stroke-width="1.300" /></svg></button>
        <div class="clock"><span>16:59</span><span>2021/9/15</span></div>
        <button class="tr note" aria-label="通知"><svg width="20" height="20" viewBox="0 0 20 20"><path d="M.7 1h18.600v14.500h-6L10 19l-3.300-3.500h-6z" fill="none" stroke="#fff" stroke-width="1.300" /></svg></button>
        <i class="desk"></i>
      </div>
    </nav>

    <div class="watermark" aria-hidden="true">
      <div class="wm-top">
        <span class="wm-bai">Bai</span>
        <svg width="104" height="112" viewBox="0 0 104 112">
          <g class="paw"><ellipse cx="15" cy="44" rx="13.500" ry="17" /><ellipse cx="39" cy="20" rx="12.500" ry="17" /><ellipse cx="70" cy="22" rx="13.500" ry="17" /><ellipse cx="89" cy="52" rx="13.500" ry="17" /><path d="M51 46c14 0 18 14 29 22 10 7 17 16 15 28-2 12-13 15-26 13-12-2-24-2-34 0-14 2-24-2-26-14-1-10 5-19 14-26 10-8 13-23 28-23z" /></g>
          <text x="51" y="100" text-anchor="middle" class="paw-text">du</text>
        </svg>
        <span class="wm-cn">经验</span>
      </div>
      <div class="wm-url">jingyan.baidu.com</div>
    </div>
  </div>
</template>

<style>
body { margin: 0; overflow: hidden; }
</style>

<style scoped>
* { box-sizing: border-box; }
.app { position: relative; display: flex; flex-direction: column; height: 100vh; background: #e6e6e6; color: #444; font: 15px/19px "Noto Sans", "Noto Sans CJK SC", sans-serif; overflow: hidden; }
button { display: flex; align-items: center; justify-content: center; padding: 0; margin: 0; border: 0; background: none; color: inherit; font: inherit; white-space: nowrap; }
input, select { margin: 0; border: 0; outline: 0; background: none; font: inherit; color: #222; appearance: none; min-width: 0; }
svg { display: block; flex: none; }
i { font-style: normal; }

.titlebar { position: relative; flex: none; display: grid; grid-template-columns: 1fr auto 1fr; align-items: center; height: 43px; background: #217346; color: #fff; }
.foliage { position: absolute; right: 0; top: 0; }
.quick { display: flex; align-items: center; padding: 3px 0 0 19px; }
.q-save { width: 32px; }
.q-arrow { width: 38px; }
.q-chev { width: 10px; }
.q-save + .q-arrow { margin-right: -3px; }
.q-chev + .q-arrow { margin-left: 3px; margin-right: -3px; }
.q-more { width: 42px; }
.dim { opacity: .3; }
.doc-title { margin: 0; font-size: 15px; line-height: 19px; font-weight: 400; padding-bottom: 6px; }
.window-tools { position: relative; display: flex; justify-content: flex-end; align-items: center; height: 43px; padding: 0 1px 2px 0; }
.user { margin-right: 13px; }
.win { width: 57px; height: 41px; }
.opts { width: 58px; margin-right: 1px; margin-left: 14px; }

.tabs { flex: none; display: flex; gap: 27px; height: 43px; padding: 0 16px 0 17px; background: #f3f2f1; font-size: 17px; line-height: 24px; }
.tab { height: 36px; padding-top: 3px; border-bottom: 4px solid transparent; }
.tab.file { margin-right: 4px; }
.tab.active { font-weight: 700; border-color: #217346; }
.tell-me { gap: 18px; height: 36px; margin-left: 17px; }
.share { gap: 5px; width: 76px; height: 30px; margin: 4px 0 0 auto; border: 1px solid #e1dfdd; border-radius: 3px; background: #fff; color: #217346; font-weight: 700; }

.ribbon { position: relative; flex: none; display: flex; height: 116px; background: #f3f2f1; }
.group { flex: none; display: flex; flex-direction: column; justify-content: space-between; height: 111px; border-right: 1px solid #b3b0ad; }
.g-clip { width: 159px; }
.g-font { width: 344px; }
.g-align { width: 318px; }
.g-num { width: 194px; }
.g-style { width: 244px; }
.g-cells { width: 176px; }
.g-edit { width: 297px; }
.g-save { width: 85px; }
.body { display: flex; }
.foot { display: flex; align-items: flex-end; height: 15px; line-height: 15px; padding-right: 3px; }
.foot span { flex: 1; text-align: center; }
.foot .launcher { margin-left: 6px; }
.foot.plain { padding-right: 0; }
.big { flex-direction: column; justify-content: flex-start; padding-top: 3px; }
.big-icon { display: flex; align-items: center; justify-content: center; height: 41px; }
.big-icon.cloud { padding-bottom: 5px; }
.line { display: flex; align-items: center; justify-content: center; gap: 5px; height: 19px; }
.paste { width: 42px; margin-left: 16px; }
.w52 { width: 53px; }
.w70 { width: 70px; }
.w74 { width: 75px; }
.w80 { width: 80px; }
.w82 { width: 82px; }
.w84 { width: 84px; }
.g-style .body { padding-left: 7px; }
.g-cells .body { padding-left: 8px; }
.list { display: flex; flex-direction: column; }
.row { justify-content: flex-start; gap: 0; }
.row .ri { margin: 0 6px 0 5px; }
.gap-chev { margin-left: 13px; }
.roomy { margin-left: 4px; }
.roomy .row { height: 29px; }
.dense { gap: 4px; width: 126px; padding-left: 10px; }
.dense .row { height: 25px; gap: 5px; }
.dense .row .ri { margin: 0 1px 0 5px; }
.dense .gap-chev { margin-left: 9px; }

.stack { display: flex; flex-direction: column; gap: 12px; padding: 10px 0 0 8px; }
.tools { display: flex; align-items: center; height: 27px; }
.tools.fields { height: 29px; }
.ib { width: 30px; height: 27px; }
.ib.on { width: 28px; height: 29px; margin: 0 1px; background: #d2d0ce; border: 1px solid #8a8886; }
.cb { width: 15px; height: 27px; }
.sep { width: 1px; height: 27px; margin: 0 3px; background: #d2d0ce; }
.sep.wide { margin-left: 7px; }
.nudge { flex: none; width: 4px; }
.tall-sep { width: 1px; height: 74px; margin: 7px 0 0 3px; background: #d2d0ce; }
.select, .name-box { display: flex; align-items: center; border: 1px solid #c8c6c4; background: #fff; color: #666; height: 29px; padding-right: 4px; }
.select select { flex: 1; width: 100%; height: 27px; padding: 0 2px; }
.w-font { width: 213px; margin-left: 2px; }
.w-size { width: 49px; margin: 0 3px 0 2px; }
.w-num { width: 174px; margin-left: 1px; }
.select svg, .name-box svg { width: 8px; }
.letter-a { font-size: 16px; font-weight: 600; color: #666; padding-top: 3px; }
.mark { align-self: flex-start; margin-top: 4px; }
.bold { font-weight: 700; font-size: 16px; }
.italic { font: italic 700 17px/20px "Liberation Serif", serif; }
.under { font-weight: 700; font-size: 16px; text-decoration: underline; text-underline-offset: 3px; }
.colour-a span { width: 20px; height: 20px; border-bottom: 5px solid #f00; font: 700 17px/14px "Noto Sans", sans-serif; color: #555; }
.pinyin { flex-direction: column; font-size: 10px; line-height: 10px; }
.pinyin b { font-size: 11px; line-height: 12px; color: #4a80b8; }
.percent { font-size: 18px; color: #555; }
.dec { flex-direction: column; align-items: center; font: 10px/10px "Liberation Sans", sans-serif; color: #444; }
.dec span { display: flex; align-items: center; }
.g-align .stack, .g-num .stack { padding-left: 9px; }
.align-area { display: flex; }
.align-area .stack:first-child { flex: none; width: 167px; }
.align-area .stack:last-child { padding-left: 4px; }
.align-area .row { height: 27px; }
.align-area .row .ri { margin-right: 5px; }
.align-area .wrap-row { height: 29px; }
.wrap-icon { display: flex; flex-direction: column; width: 19px; padding-left: 2px; font: 12px/11px "Liberation Sans", sans-serif; color: #555; }
.wrap-icon span { display: flex; align-items: center; }
.collapse { align-self: flex-end; margin: 0 11px 4px auto; }

.formula-bar { flex: none; display: flex; height: 56px; padding: 13px 6px 11px 6px; background: linear-gradient(#cfcfcf, #e6e6e6 8px); }
.name-box { width: 127px; height: 32px; padding: 0 7px; background: #fdfdfd; }
.name-box input { flex: 1; width: 90px; padding: 0; color: #444; }
.dots { display: flex; flex-direction: column; justify-content: center; gap: 2px; width: 37px; padding-left: 17px; }
.dots i { width: 3px; height: 3px; background: #aaa; }
.fx { display: flex; align-items: center; width: 137px; margin-right: 3px; border: 1px solid #c8c6c4; background: #fdfdfd; }
.fx button { flex: 1; }
.fx-btn { font: italic 700 21px/24px "Liberation Serif", serif; color: #666; }
.fx-btn sub { font-size: 15px; line-height: 10px; }
.formula { flex: 1; display: flex; align-items: center; padding: 0 5px; border: 1px solid #c8c6c4; background: #fdfdfd; }
.formula input { flex: 1; height: 28px; }

.sheet { position: relative; flex: 1; display: flex; min-height: 0; }
.grid-wrap { position: relative; flex: 1; min-width: 0; overflow: hidden; border-bottom: 1px solid #999; }
.grid-wrap::after { content: ""; position: absolute; top: 23px; right: 0; bottom: 0; width: 1px; background: #999; }
.cells { table-layout: fixed; width: 1954px; border-collapse: separate; border-spacing: 0; background: #fff; }
.cells th, .cells td { width: 80px; height: 23px; padding: 0; border-right: 1px solid #d4d4d4; border-bottom: 1px solid #d4d4d4; font-weight: 400; }
.cells th { font-size: 16px; line-height: 20px; color: #111; text-align: center; }
.cells thead th { height: 24px; padding-top: 3px; border-right: 0; border-bottom-color: #999; background: linear-gradient(#d0d0d0, #999) right / 1px 100% no-repeat #e6e6e6; }
.cells .corner, .cells tbody th { width: 34px; }
.cells thead .corner { padding-top: 1px; }
.corner svg { margin: 0 0 0 15px; }
.cells tbody th { background: #e6e6e6; border-right-color: #999; border-bottom-color: #bbb; padding: 2px 0 0; }
.cells thead th.sel { background-color: #d2d2d2; color: #217346; border-bottom-color: #217346; box-shadow: inset 0 -1px #217346; }
.cells tbody th.sel { background: #d2d2d2; color: #217346; border-right-color: #217346; box-shadow: inset -1px 0 #217346; }
.cur { position: relative; }
.cur::before { content: ""; position: absolute; inset: -2px; border: 2px solid #217346; }
.cur::after { content: ""; position: absolute; right: -4px; bottom: -4px; width: 7px; height: 7px; border: solid #fff; border-width: 1px 0 0 1px; background: #217346; }
.vscroll { flex: none; display: flex; flex-direction: column; width: 19px; margin: 3px 3px 0; color: #666; }
.vscroll button, .hscroll button { flex: none; width: 19px; height: 19px; border: 1px solid #ababab; background: #fff; }
.v-thumb { flex: 1; border: 1px solid #ababab; background: #fff; }
.v-rest { height: 23px; background: #dadada; }
.meter { position: absolute; right: 0; bottom: 84px; width: 11px; height: 64px; padding: 17px 0 1px; border: 3px solid #777; border-radius: 6px; background: #fff; }
.meter i { display: block; height: 40px; border-radius: 2px; background: #f03a3a; }

.sheet-bar { flex: none; display: flex; align-items: flex-start; height: 29px; border-bottom: 1px solid #c6c6c6; padding-right: 25px; color: #666; }
.sheet-nav { display: flex; gap: 20px; width: 103px; padding: 10px 0 0 26px; color: #bbb; }
.sheet-tab { position: relative; width: 82px; height: 26px; margin-top: -1px; padding-bottom: 4px; border: 1px solid #999; border-width: 0 1px 2px; border-bottom-color: #217346; background: #fff; color: #217346; font-size: 17px; }
.add { margin: 4px 0 0 33px; }
.sheet-bar .dots { margin: 7px 0 0 auto; width: 18px; padding: 0; }
.hscroll { display: flex; width: calc(38% + 8px); height: 19px; margin-top: 4px; }
.h-thumb { flex: 1; border: 1px solid #ababab; background: #fff; }
.h-rest { width: 30px; background: #dadada; }

.status { position: relative; flex: none; display: flex; align-items: center; height: 26px; padding-left: 10px; background: #f3f2f1; }
.views { display: flex; margin-left: auto; margin-right: 230px; }
.view { width: 50px; height: 26px; }
.view.on { background: #c8c6c4; }
.ime { position: absolute; right: 1px; bottom: 0; display: flex; align-items: center; justify-content: space-around; width: 257px; height: 31px; padding: 0 3px 0 37px; border: 1px solid #bbb; background: #fff; }
.ime button { width: 24px; }
.ime-logo { position: absolute; left: 0; bottom: -1px; }

.taskbar { flex: none; display: flex; height: 50px; color: #fff; background: linear-gradient(90deg, #1e322b, #1a2928 15%, #22342b 20%, #1b2729 30%, #22342c 38%, #20302c 52%, #213a33 60%, #213a33 67%, #1b2a2c 72%, #22342c 76%, #1e342e 82%, #2a3934 90%, #26342f); }
.sys { width: 60px; }
.task { width: 61px; margin-right: 1px; border-bottom: 3px solid transparent; padding-top: 3px; }
.task.run { background: linear-gradient(#76b9ed, #76b9ed) center bottom / 51px 3px no-repeat; background-origin: border-box; }
.task.current { background-color: #4d5d55; background-size: 61px 3px; }
.task.alert { background: #85603a; border-color: #ff7300; }
.tray { display: flex; align-items: center; margin-left: auto; }
.sogou { margin-right: 135px; margin-bottom: 3px; }
.weather { gap: 13px; font-size: 17px; margin-right: 14px; }
.sun { width: 24px; height: 24px; border-radius: 50%; background: linear-gradient(135deg, #ffe16b, #ff9d0a); }
.tr { width: 32px; height: 50px; }
.tr.slim { width: 31px; margin-right: 2px; }
.clock { display: flex; flex-direction: column; align-items: center; width: 100px; line-height: 23px; margin-bottom: 1px; }
.note { margin-left: 5px; }
.desk { width: 1px; height: 50px; margin: 0 5px 0 19px; background: #718078; }

.watermark { position: absolute; right: 103px; bottom: 42px; width: 345px; color: rgba(255, 255, 255, .75); pointer-events: none; text-shadow: 0 0 2px rgba(110, 110, 110, .7), 0 0 3px rgba(160, 160, 160, .5); }
.wm-top { display: flex; align-items: flex-end; height: 112px; }
.wm-bai { font: 700 78px/80px "Liberation Sans", sans-serif; margin: 0 -4px -2px 0; }
.paw { fill: rgba(255, 255, 255, .8); stroke: #ccc; stroke-width: 1.500; }
.paw-text { font: 700 50px "Liberation Sans", sans-serif; fill: #fff; }
.wm-cn { font: 900 58px/60px "Noto Sans CJK SC", sans-serif; margin-bottom: 7px; white-space: nowrap; }
.wm-url { font: 400 40px/46px "Noto Sans", sans-serif; white-space: nowrap; margin-top: 6px; }
</style>
